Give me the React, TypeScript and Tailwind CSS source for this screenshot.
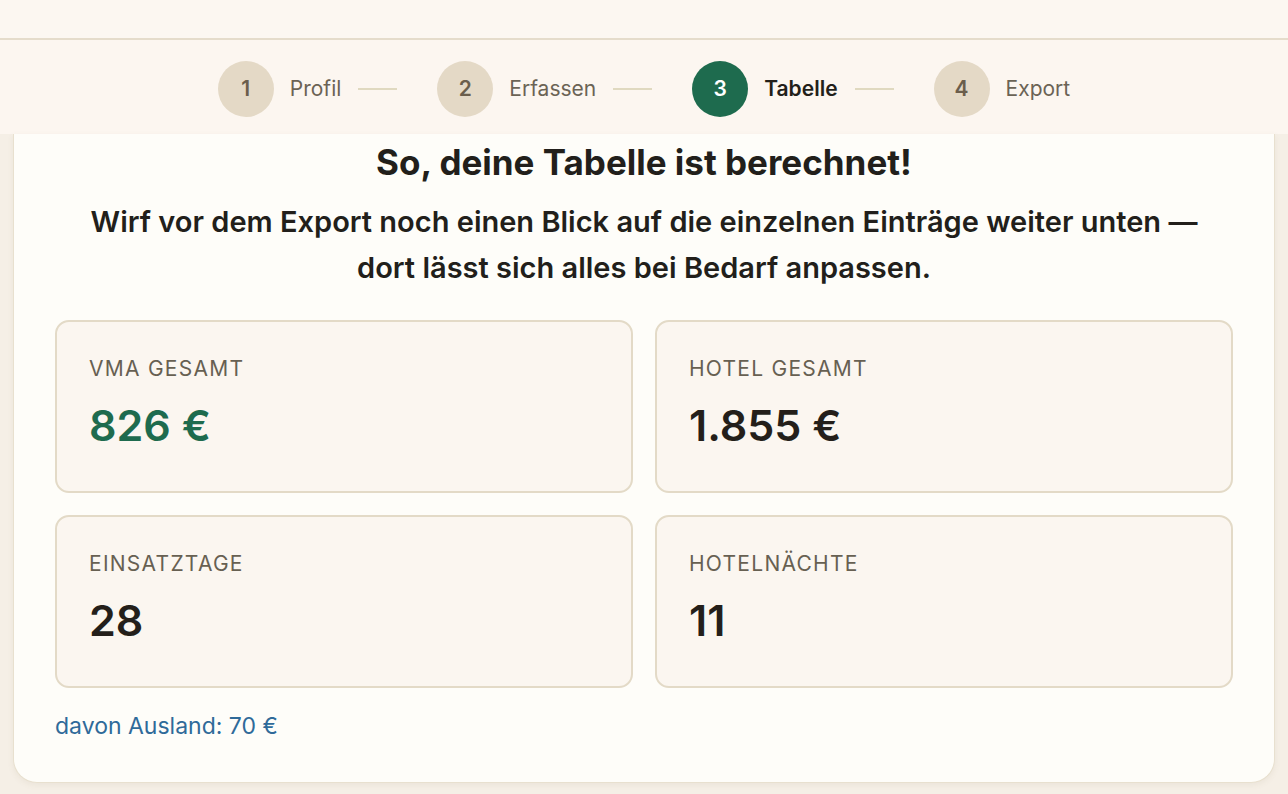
import React from "react";

const steps = [
  { n: 1, label: "Profil" },
  { n: 2, label: "Erfassen" },
  { n: 3, label: "Tabelle", active: true },
  { n: 4, label: "Export" },
];

function Stat({ label, value, green }: { label: string; value: string; green?: boolean }) {
  return (
    <div className="rounded-[14px] border-2 border-[#e3dac7] bg-[#fbf6f0] px-8 pt-8 pb-[33px]">
      <div className="text-[21px] leading-[30px] tracking-[0.06em] text-[#676052]">{label}</div>
      <div
        className={
          "mt-2 text-[43px] leading-[66px] font-semibold " + (green ? "text-[#1e6b4e]" : "text-[#241f1a]")
        }
      >
        {value}
      </div>
    </div>
  );
}

export default function App() {
  return (
    <div
      className="min-h-[794px] bg-[#f5efe6]"
      style={{ fontFamily: "Inter, 'Noto Sans', sans-serif" }}
    >
      <div className="h-[40px] bg-[#fcf7f1] border-b-2 border-[#e5dccb]" />
      <div className="h-[94px] pt-1 bg-[#fcf6f0] flex items-center justify-center">
        {steps.map((s, i) => (
          <div key={s.n} className="flex items-center">
            <div
              className={
                "w-[56px] h-[56px] rounded-full flex items-center justify-center text-[21px] font-semibold " +
                (s.active ? "bg-[#1e6b4e] text-white" : "bg-[#e4d9c6] text-[#6b5e4c]")
              }
            >
              {s.n}
            </div>
            <div
              className={
                "ml-4 text-[21px] " +
                (s.active ? "font-semibold text-[#231f1a]" : "text-[#6b6355]")
              }
            >
              {s.label}
            </div>
            {i < steps.length - 1 && <div className="ml-[17px] mr-[40px] w-[39px] h-[2px] bg-[#e0d9c0]" />}
          </div>
        ))}
      </div>
      <div className="mx-[13px] rounded-b-[24px] border border-t-0 border-[#e8e0cf] bg-[#fefdf9] px-[41px] pt-2 pb-10 shadow-[0_2px_6px_rgba(120,100,60,0.08)]">
        <h1 className="text-center text-[35px] leading-[40px] font-bold text-[#221f1b]">
          So, deine Tabelle ist berechnet!
        </h1>
        <p className="mt-[17px] text-center text-[29px] leading-[46px] font-semibold text-[#221f1b]">
          Wirf vor dem Export noch einen Blick auf die einzelnen Einträge weiter unten —<br />
          dort lässt sich alles bei Bedarf anpassen.
        </p>
        <div className="mt-[29px] grid grid-cols-2 gap-[22px]">
          <Stat label="VMA GESAMT" value="826 €" green />
          <Stat label="HOTEL GESAMT" value="1.855 €" />
          <Stat label="EINSATZTAGE" value="28" />
          <Stat label="HOTELNÄCHTE" value="11" />
        </div>
        <div className="mt-[22px] text-[23px] leading-[32px] text-[#2f6a99]">davon Ausland: 70 €</div>
      </div>
    </div>
  );
}
